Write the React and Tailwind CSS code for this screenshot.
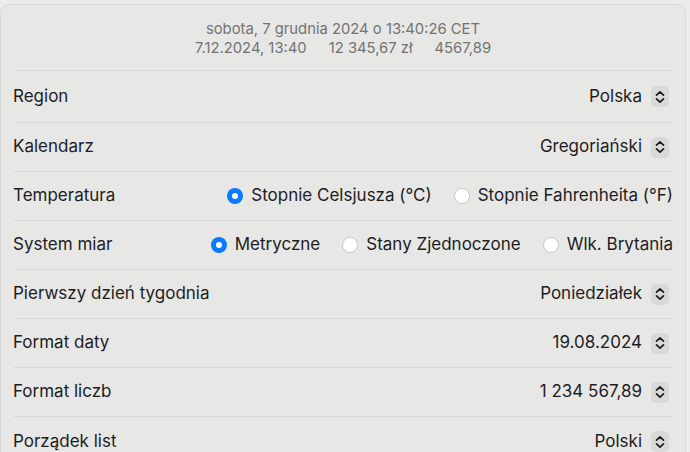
import React, { useState } from 'react';

const Stepper = () => (
  <span className="ml-[9px] mr-[4px] flex h-[21px] w-[18px] items-center justify-center rounded-[5px] bg-[#d9d9d8]">
    <svg width="10" height="14" viewBox="0 0 10 14" fill="none" stroke="#1d1d1f" strokeWidth="1.7" strokeLinecap="round" strokeLinejoin="round">
      <path d="M1.5 5.2 L5 1.8 L8.5 5.2" />
      <path d="M1.5 8.8 L5 12.2 L8.5 8.8" />
    </svg>
  </span>
);

const Radio = ({ checked, label, onClick }) => (
  <button onClick={onClick} className="flex items-center gap-2">
    {checked ? (
      <span className="flex h-4 w-4 items-center justify-center rounded-full bg-[#0a7aff]">
        <span className="h-[6px] w-[6px] rounded-full bg-white" />
      </span>
    ) : (
      <span className="h-4 w-4 rounded-full border border-[#c9c9c9] bg-white" />
    )}
    <span>{label}</span>
  </button>
);

const Row = ({ label, children, first, last }) => (
  <div className={`flex items-center justify-between ${first ? 'h-[52px]' : 'h-[49px]'} ${last ? '' : 'border-b border-[#d9d9d8]'}`}>
    <span>{label}</span>
    <div className="flex items-center">{children}</div>
  </div>
);

export default function App() {
  const [temp, setTemp] = useState('c');
  const [units, setUnits] = useState('metric');

  return (
    <div className="h-[452px] w-[690px] overflow-hidden bg-[#ececeb] pt-1 font-['Inter','Noto_Sans',sans-serif] text-[17px] text-[#1d1d1f]">
      <div className="w-[686px] rounded-t-[9px] border border-b-0 border-[#d8d8d7] bg-[#e7e7e6] px-[12px]">
        <div className="flex h-[66px] flex-col items-center justify-center border-b border-[#d9d9d8] pt-[2px] text-[14.8px] leading-[19px] text-[#737373]">
          <div>sobota, 7 grudnia 2024 o 13:40:26 CET</div>
          <div className="flex gap-[22px]">
            <span>7.12.2024, 13:40</span>
            <span>12 345,67 zł</span>
            <span>4567,89</span>
          </div>
        </div>

        <Row label="Region" first>
          <span>Polska</span>
          <Stepper />
        </Row>
        <Row label="Kalendarz">
          <span>Gregoriański</span>
          <Stepper />
        </Row>
        <Row label="Temperatura">
          <div className="flex gap-[22px]">
            <Radio checked={temp === 'c'} label="Stopnie Celsjusza (°C)" onClick={() => setTemp('c')} />
            <Radio checked={temp === 'f'} label="Stopnie Fahrenheita (°F)" onClick={() => setTemp('f')} />
          </div>
        </Row>
        <Row label="System miar">
          <div className="flex gap-[22px]">
            <Radio checked={units === 'metric'} label="Metryczne" onClick={() => setUnits('metric')} />
            <Radio checked={units === 'us'} label="Stany Zjednoczone" onClick={() => setUnits('us')} />
            <Radio checked={units === 'uk'} label="Wlk. Brytania" onClick={() => setUnits('uk')} />
          </div>
        </Row>
        <Row label="Pierwszy dzień tygodnia">
          <span>Poniedziałek</span>
          <Stepper />
        </Row>
        <Row label="Format daty">
          <span>19.08.2024</span>
          <Stepper />
        </Row>
        <Row label="Format liczb">
          <span>1 234 567,89</span>
          <Stepper />
        </Row>
        <Row label="Porządek list" last>
          <span>Polski</span>
          <Stepper />
        </Row>
      </div>
    </div>
  );
}
